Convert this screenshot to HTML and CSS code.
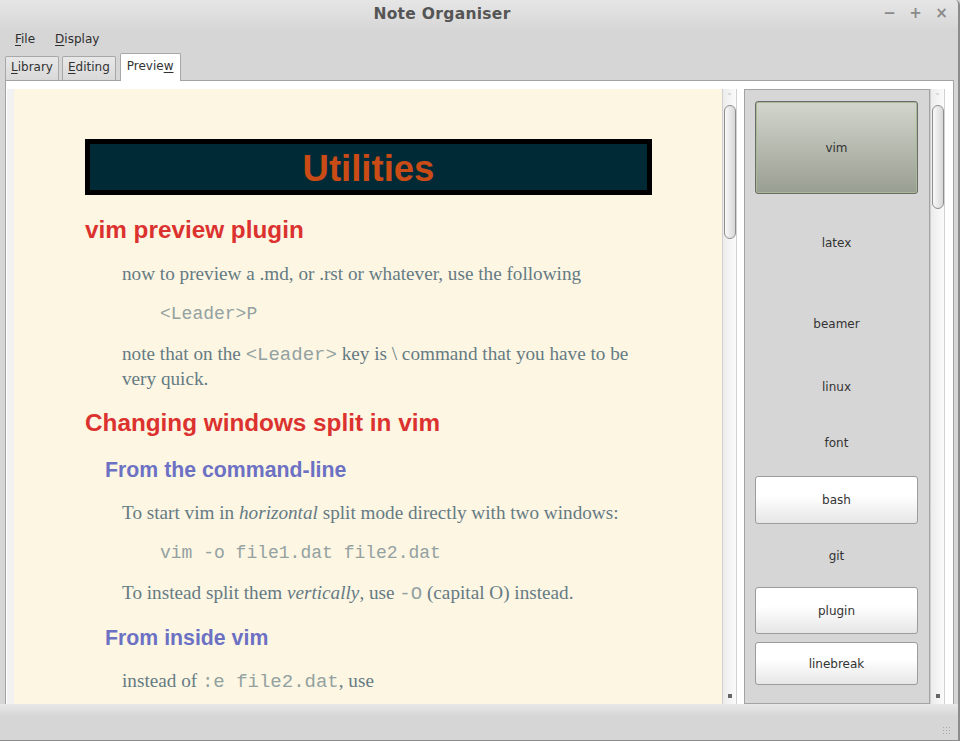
FILE: index.html
```html
<!DOCTYPE html>
<html>
<head>
<meta charset="utf-8">
<title>Note Organiser</title>
<link rel="stylesheet" href="styles.css">
</head>
<body>
<div class="window">
  <div class="titlebar">
    <div class="title">Note Organiser</div>
    <div class="wm-buttons">
      <span class="wm-btn">−</span>
      <span class="wm-btn">+</span>
      <span class="wm-btn">×</span>
    </div>
  </div>
  <div class="menubar">
    <span class="menu-item"><u>F</u>ile</span>
    <span class="menu-item"><u>D</u>isplay</span>
  </div>
  <div class="tabbar">
    <div class="tab"><u>L</u>ibrary</div>
    <div class="tab"><u>E</u>diting</div>
    <div class="tab active">Previe<u>w</u></div>
  </div>
  <div class="notebook">
    <div class="preview-wrap">
      <div class="preview">
        <div class="doc-title">Utilities</div>
        <h2 class="h2">vim preview plugin</h2>
        <p class="para">now to preview a .md, or .rst or whatever, use the following</p>
        <pre class="code">&lt;Leader&gt;P</pre>
        <p class="para">note that on the <code class="ic">&lt;Leader&gt;</code> key is \ command that you have to be very quick.</p>
        <h2 class="h2">Changing windows split in vim</h2>
        <h3 class="h3">From the command-line</h3>
        <p class="para">To start vim in <em>horizontal</em> split mode directly with two windows:</p>
        <pre class="code">vim -o file1.dat file2.dat</pre>
        <p class="para">To instead split them <em>vertically</em>, use <code class="ic">-O</code> (capital O) instead.</p>
        <h3 class="h3">From inside vim</h3>
        <p class="para">instead of <code class="ic">:e file2.dat</code>, use</p>
      </div>
    </div>
    <div class="scrollbar">
      <div class="arrow-up">˄</div>
      <div class="thumb thumb-long"></div>
      <div class="arrow-down"></div>
    </div>
    <div class="tagpanel">
      <div class="tag tag-selected h-vim">vim</div>
      <div class="tag h-latex">latex</div>
      <div class="tag h-beamer">beamer</div>
      <div class="tag h-linux">linux</div>
      <div class="tag h-font">font</div>
      <div class="tag tag-button h-bash">bash</div>
      <div class="tag h-git">git</div>
      <div class="tag tag-button h-plugin">plugin</div>
      <div class="tag tag-button h-linebreak">linebreak</div>
    </div>
    <div class="scrollbar">
      <div class="arrow-up">˄</div>
      <div class="thumb thumb-short"></div>
      <div class="arrow-down"></div>
    </div>
  </div>
  <div class="statusbar">
    <div class="grip"></div>
  </div>
</div>
</body>
</html>
```
FILE: styles.css
```css
* { box-sizing: border-box; }
html, body { margin: 0; padding: 0; }
body {
  width: 960px;
  height: 741px;
  overflow: hidden;
  font-family: "DejaVu Sans", sans-serif;
  font-size: 12px;
  color: #3c3c3c;
  background: #d6d6d6;
}
.window {
  width: 960px;
  height: 741px;
  display: flex;
  flex-direction: column;
  background: #d6d6d6;
  border-right: 2px solid #8c8c8c;
  border-bottom: 1px solid #8c8c8c;
  border-top-right-radius: 5px;
  overflow: hidden;
}
.titlebar {
  height: 28px;
  flex: none;
  display: flex;
  align-items: center;
  background: linear-gradient(#e6e6e6, #d8d8d8);
  position: relative;
}
.title {
  flex: 1;
  text-align: center;
  padding-right: 74px;
  font-weight: bold;
  font-size: 15.5px;
  color: #555;
  letter-spacing: 0.3px;
}
.wm-buttons {
  position: absolute;
  right: 10px;
  top: 4px;
  display: flex;
  gap: 13px;
}
.wm-btn {
  width: 13px;
  text-align: center;
  font-size: 15px;
  font-weight: bold;
  color: #8a8a8a;
}
.menubar {
  height: 22px;
  flex: none;
  display: flex;
  align-items: center;
  padding-left: 15px;
  padding-bottom: 1px;
  gap: 20px;
  color: #2e2e2e;
}
.menu-item u { text-decoration: underline; text-underline-offset: 2px; }
.tabbar {
  height: 30px;
  flex: none;
  display: flex;
  align-items: flex-end;
  padding-left: 5px;
  gap: 3px;
}
.tab {
  height: 24px;
  padding: 0 5px 3px;
  border: 1px solid #a8a8a8;
  border-bottom: none;
  border-radius: 2px 2px 0 0;
  background: linear-gradient(#e8e8e8, #d9d9d9);
  display: flex;
  align-items: center;
  color: #333;
}
.tab u { text-underline-offset: 2px; }
.tab.active {
  height: 28px;
  margin-left: 1px;
  background: #ffffff;
  padding: 0 6px 4px;
  margin-bottom: -1px;
  position: relative;
  z-index: 2;
}
.notebook {
  flex: 1;
  margin: 0 4px 0 5px;
  border: 1px solid #a3a3a3;
  border-bottom: none;
  background: #ffffff;
  display: flex;
  padding: 8px 9px 0 1px;
  min-height: 0;
}
.preview-wrap {
  width: 715px;
  flex: none;
  border-left: 7px solid #f2f2f2;
  background: #fdf6e3;
  overflow: hidden;
}
.preview {
  padding: 50px 70px 0 71px;
  font-family: "Liberation Serif", serif;
  font-size: 19.2px;
  color: #657b83;
}
.doc-title {
  height: 56px;
  border: 5px solid #000;
  background: #002b36;
  color: #cb4b16;
  font-family: "Liberation Sans", Arial, sans-serif;
  font-weight: bold;
  font-size: 36.5px;
  line-height: 44px;
  padding-top: 3px;
  text-align: center;
  margin-bottom: 20px;
}
.h2 {
  font-family: "Liberation Sans", Arial, sans-serif;
  font-weight: bold;
  font-size: 24.3px;
  line-height: 30px;
  color: #dc322f;
  margin: 17px 0;
}
.h3 {
  font-family: "Liberation Sans", Arial, sans-serif;
  font-weight: bold;
  font-size: 21.3px;
  line-height: 26px;
  color: #6c71c4;
  margin: 19px 0 18px 20px;
}
.para {
  margin: 16px 0 16px 37px;
  line-height: 24px;
}
.code {
  margin: 16px 0 16px 75px;
  font-family: "Liberation Mono", monospace;
  font-size: 18px;
  line-height: 24px;
  color: #93a1a1;
}
.ic {
  font-family: "Liberation Mono", monospace;
  font-size: 19px;
  color: #93a1a1;
}
.scrollbar {
  width: 15px;
  flex: none;
  background: linear-gradient(90deg, #ececec, #fbfbfb);
  border-left: 1px solid #d0d0d0;
  border-right: 1px solid #d0d0d0;
  display: flex;
  flex-direction: column;
  align-items: center;
  position: relative;
}
.arrow-up {
  height: 16px;
  font-size: 9px;
  line-height: 16px;
  color: #bbb;
}
.thumb {
  width: 12px;
  border: 1px solid #8e8e8e;
  border-radius: 6px;
  background: linear-gradient(90deg, #f8f8f8, #d8d8d8);
}
.thumb-long { height: 134px; }
.thumb-short { height: 104px; }
.arrow-down {
  position: absolute;
  bottom: 6px;
  width: 4px;
  height: 4px;
  background: #666;
}
.tagpanel {
  width: 186px;
  flex: none;
  margin: 0 0 0 7px;
  background: #d6d6d6;
  border: 1px solid #a3a3a3;
  padding: 11px 11px 0 10px;
  display: flex;
  flex-direction: column;
  gap: 8px;
  overflow: hidden;
  color: #333;
}
.tag {
  flex: none;
  display: flex;
  align-items: center;
  justify-content: center;
}
.tag-selected {
  border: 1px solid #6b6b6b;
  border-radius: 3px;
  background: linear-gradient(#d2d6cc, #999e92);
  box-shadow: inset 0 0 0 1px #a8b994;
}
.tag-button {
  border: 1px solid #9c9c9c;
  border-radius: 3px;
  background: linear-gradient(#ffffff 40%, #e6e6e6);
}
.h-vim { height: 93px; }
.h-latex { height: 82px; }
.h-beamer { height: 64px; }
.h-linux { height: 46px; }
.h-font { height: 50px; }
.h-bash { height: 48px; }
.h-git { height: 47px; }
.h-plugin { height: 47px; }
.h-linebreak { height: 43px; }
.statusbar {
  height: 36px;
  flex: none;
  background: linear-gradient(#e8e8e8, #d6d6d6 12px);
  position: relative;
}
.grip {
  position: absolute;
  right: 6px;
  bottom: 4px;
  width: 10px;
  height: 10px;
  background-image: radial-gradient(circle, #aaa 0.8px, transparent 1px);
  background-size: 3px 3px;
}
```
